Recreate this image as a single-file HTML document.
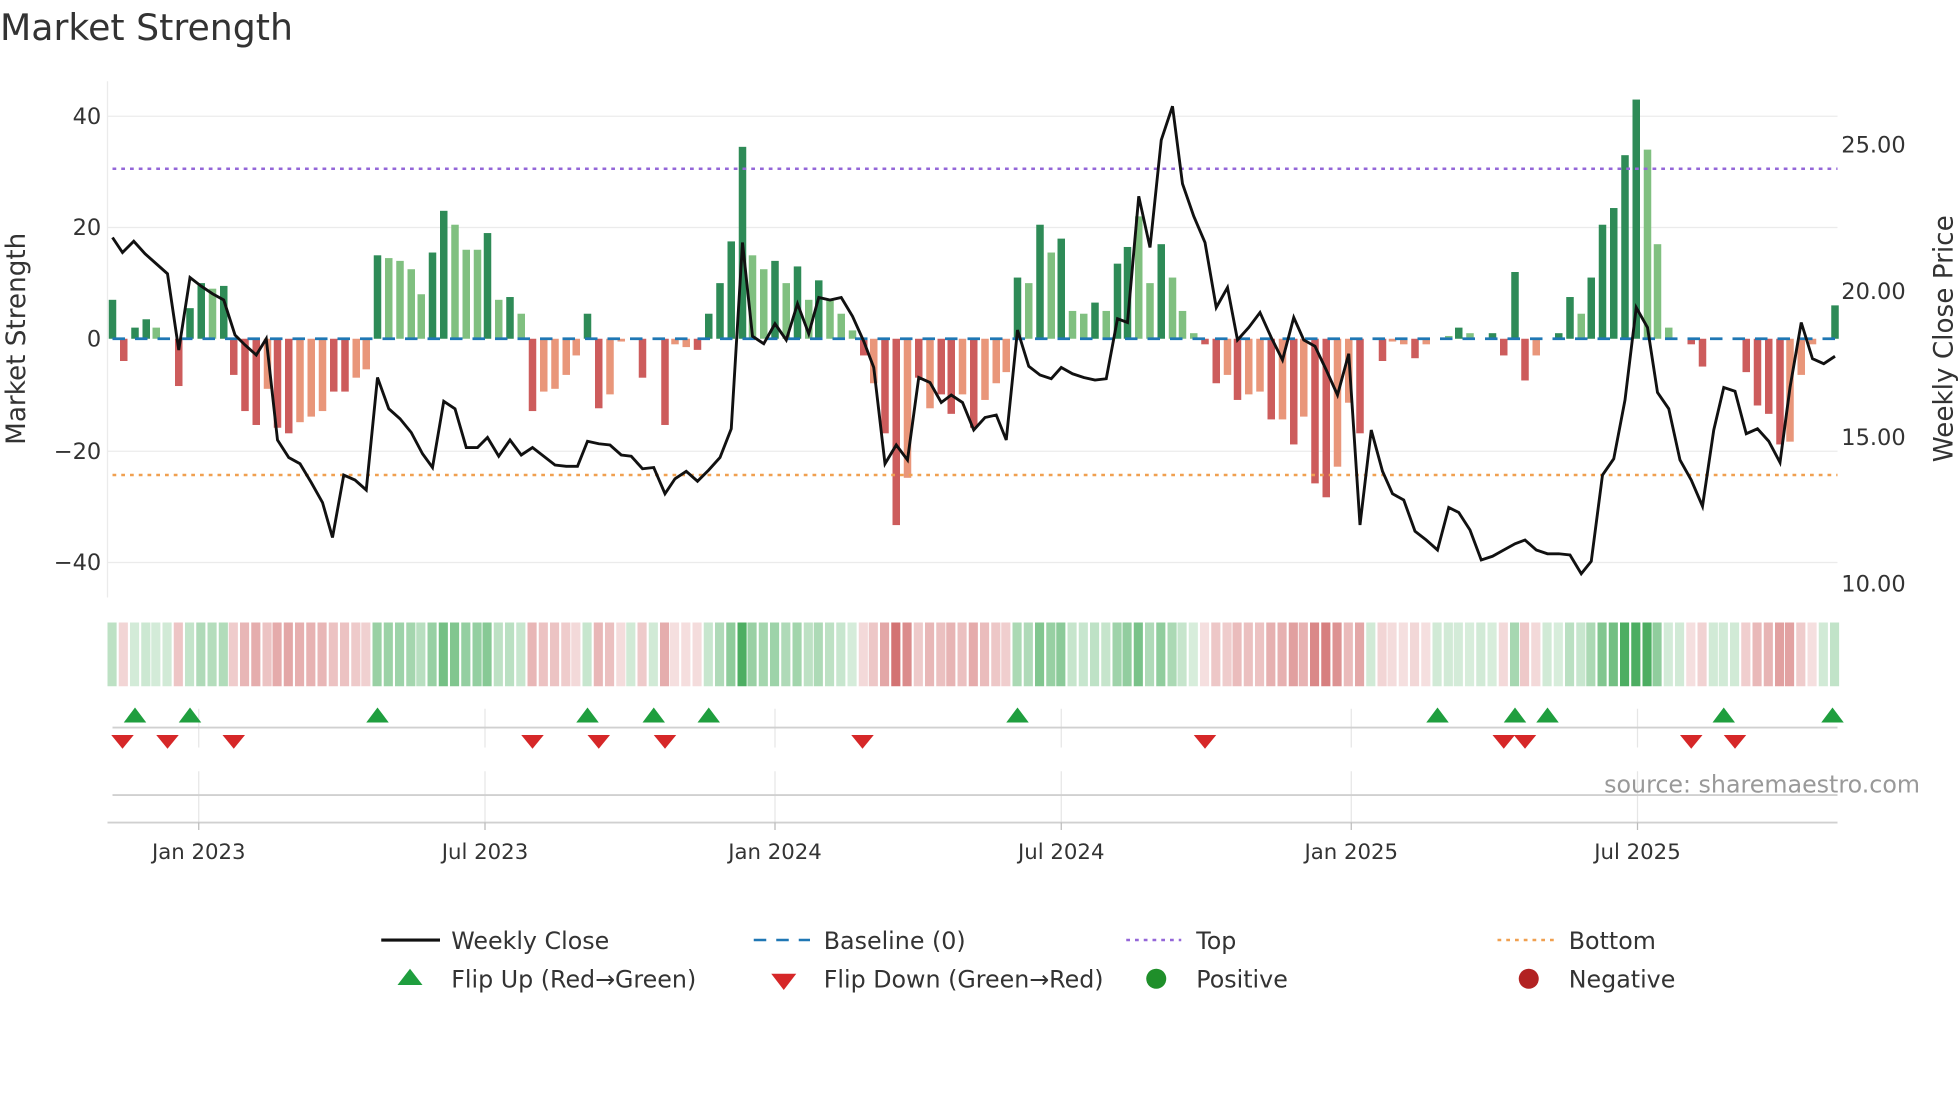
<!DOCTYPE html>
<html><head><meta charset="utf-8"><style>
html,body{margin:0;padding:0;background:#fff;width:1960px;height:1102px;overflow:hidden}
svg{display:block;font-family:"DejaVu Sans","Liberation Sans",sans-serif}
</style></head><body>
<svg id="s" width="1960" height="1102" viewBox="0 0 1568 881.6" xmlns="http://www.w3.org/2000/svg">
<text x="0" y="32" font-size="29" fill="#333">Market Strength</text>
<g stroke="#ebebeb" stroke-width="1">
<line x1="86" y1="93" x2="1470" y2="93"/><line x1="86" y1="182" x2="1470" y2="182"/>
<line x1="86" y1="361" x2="1470" y2="361"/><line x1="86" y1="450" x2="1470" y2="450"/>
<line x1="86" y1="65" x2="86" y2="478"/>
</g>
<g font-size="18" fill="#333" text-anchor="end">
<text x="81" y="99">40</text><text x="81" y="188">20</text><text x="81" y="277">0</text>
<text x="81" y="367">−20</text><text x="81" y="456">−40</text>
</g>
<g font-size="18" fill="#333">
<text x="1473" y="122">25.00</text><text x="1473" y="239">20.00</text>
<text x="1473" y="356">15.00</text><text x="1473" y="473">10.00</text>
</g>
<text transform="translate(20,271) rotate(-90)" font-size="21" fill="#333" text-anchor="middle">Market Strength</text>
<text transform="translate(1562,271) rotate(-90)" font-size="21" fill="#333" text-anchor="middle">Weekly Close Price</text>
<g id="bars"></g>
<line x1="90" y1="271" x2="1470" y2="271" stroke="#1f77b4" stroke-width="2.2" stroke-dasharray="10,8"/>
<line x1="90" y1="135" x2="1470" y2="135" stroke="#9467d8" stroke-width="2" stroke-dasharray="3,4"/>
<line x1="90" y1="380" x2="1470" y2="380" stroke="#f0a050" stroke-width="2" stroke-dasharray="3,4"/>
<polyline id="price" fill="none" stroke="#111" stroke-width="2.3" stroke-linejoin="miter"/>
<g id="heat"></g>
<g stroke="#e6e6e6" stroke-width="1">
<line x1="159" y1="567" x2="159" y2="598"/><line x1="388" y1="567" x2="388" y2="598"/><line x1="620" y1="567" x2="620" y2="598"/><line x1="849" y1="567" x2="849" y2="598"/><line x1="1081" y1="567" x2="1081" y2="598"/><line x1="1310" y1="567" x2="1310" y2="598"/>
<line x1="159" y1="617" x2="159" y2="658"/><line x1="388" y1="617" x2="388" y2="658"/><line x1="620" y1="617" x2="620" y2="658"/><line x1="849" y1="617" x2="849" y2="658"/><line x1="1081" y1="617" x2="1081" y2="658"/><line x1="1310" y1="617" x2="1310" y2="658"/>
</g>
<line x1="90" y1="582" x2="1470" y2="582" stroke="#d0d0d0" stroke-width="1.5"/>
<line x1="90" y1="636" x2="1470" y2="636" stroke="#d0d0d0" stroke-width="1.5"/>
<line x1="86" y1="658" x2="1470" y2="658" stroke="#d0d0d0" stroke-width="1.5"/>
<g stroke="#bbb" stroke-width="1"><line x1="159" y1="658" x2="159" y2="664"/><line x1="388" y1="658" x2="388" y2="664"/><line x1="620" y1="658" x2="620" y2="664"/><line x1="849" y1="658" x2="849" y2="664"/><line x1="1081" y1="658" x2="1081" y2="664"/><line x1="1310" y1="658" x2="1310" y2="664"/></g>
<g id="marks"></g>
<text x="1536" y="634" font-size="19" fill="#999" text-anchor="end">source: sharemaestro.com</text>
<g font-size="17" fill="#333" text-anchor="middle">
<text x="159" y="687">Jan 2023</text><text x="388" y="687">Jul 2023</text><text x="620" y="687">Jan 2024</text>
<text x="849" y="687">Jul 2024</text><text x="1081" y="687">Jan 2025</text><text x="1310" y="687">Jul 2025</text>
</g>
<g font-size="19" fill="#333">
<line x1="305" y1="752" x2="352" y2="752" stroke="#111" stroke-width="2.5"/><text x="361" y="759">Weekly Close</text>
<line x1="603" y1="752" x2="648" y2="752" stroke="#1f77b4" stroke-width="2" stroke-dasharray="10,8"/><text x="659" y="759">Baseline (0)</text>
<line x1="901" y1="752" x2="945" y2="752" stroke="#9467d8" stroke-width="2" stroke-dasharray="3,4"/><text x="957" y="759">Top</text>
<line x1="1198" y1="752" x2="1243" y2="752" stroke="#f0a050" stroke-width="2" stroke-dasharray="3,4"/><text x="1255" y="759">Bottom</text>
<polygon points="328,775 338,788 318,788" fill="#1f9e3e"/><text x="361" y="790">Flip Up (Red→Green)</text>
<polygon points="617,779 637,779 627,792" fill="#d62728"/><text x="659" y="790">Flip Down (Green→Red)</text>
<circle cx="925" cy="783" r="8" fill="#1f8f2a"/><text x="957" y="790">Positive</text>
<circle cx="1223" cy="783" r="8" fill="#b22222"/><text x="1255" y="790">Negative</text>
</g>
</svg>
<script>
var B=[[90,7,'D'],[99,-4,'R'],[108,2,'D'],[117,3.5,'D'],[125,2,'L'],[134,0,'D'],[143,-8.5,'R'],[152,5.5,'D'],[161,10,'D'],[170,9,'L'],[179,9.5,'D'],[187,-6.5,'R'],[196,-13,'R'],[205,-15.5,'R'],[214,-9,'S'],[222,-16,'R'],[231,-17,'R'],[240,-15,'S'],[249,-14,'S'],[258,-13,'S'],[267,-9.5,'R'],[276,-9.5,'R'],[285,-7,'S'],[293,-5.5,'S'],
[302,15,'D'],[311,14.5,'L'],[320,14,'L'],[329,12.5,'L'],[337,8,'L'],[346,15.5,'D'],[355,23,'D'],[364,20.5,'L'],[373,16,'L'],[382,16,'L'],[390,19,'D'],[399,7,'L'],[408,7.5,'D'],[417,4.5,'L'],
[426,-13,'R'],[435,-9.5,'S'],[444,-9,'S'],[453,-6.5,'S'],[461,-3,'S'],[470,4.5,'D'],[479,-12.5,'R'],[488,-10,'S'],[497,-0.5,'S'],[505,0,'D'],[514,-7,'R'],[523,0,'D'],[532,-15.5,'R'],[540,-1,'S'],[549,-1.5,'S'],[558,-2,'R'],[567,4.5,'D'],[576,10,'D'],[585,17.5,'D'],[594,34.5,'D'],[602,15,'L'],[611,12.5,'L'],[620,14,'D'],[629,10,'L'],[638,13,'D'],[647,7,'L'],[655,10.5,'D'],[664,7,'L'],[673,4.5,'L'],[682,1.5,'L'],
[691,-3,'R'],[699,-8,'S'],[708,-17,'R'],[717,-33.5,'R'],[726,-25,'S'],[735,-7,'R'],[744,-12.5,'S'],[753,-10,'R'],[761,-13.5,'R'],[770,-10,'S'],[779,-16,'R'],[788,-11,'S'],[797,-8,'S'],[805,-6,'S'],
[814,11,'D'],[823,10,'L'],[832,20.5,'D'],[841,15.5,'L'],[849,18,'D'],[858,5,'L'],[867,4.5,'L'],[876,6.5,'D'],[885,5,'L'],[894,13.5,'D'],[902,16.5,'D'],[911,22,'L'],[920,10,'L'],[929,17,'D'],[938,11,'L'],[946,5,'L'],[955,1,'L'],
[964,-1,'R'],[973,-8,'R'],[982,-6.5,'S'],[990,-11,'R'],[999,-10,'S'],[1008,-9.5,'S'],[1017,-14.5,'R'],[1026,-14.5,'S'],[1035,-19,'R'],[1043,-14,'S'],[1052,-26,'R'],[1061,-28.5,'R'],[1070,-23,'S'],[1079,-11.5,'S'],[1088,-17,'R'],[1097,0,'D'],[1106,-4,'R'],[1114,-0.5,'S'],[1123,-1,'S'],[1132,-3.5,'R'],[1141,-1,'S'],[1150,0,'L'],[1159,0.5,'L'],[1167,2,'D'],[1176,1,'L'],[1185,0,'L'],[1194,1,'D'],[1203,-3,'R'],[1212,12,'D'],[1220,-7.5,'R'],[1229,-3,'S'],[1238,0,'L'],[1247,1,'D'],[1256,7.5,'D'],[1265,4.5,'L'],[1273,11,'D'],[1282,20.5,'D'],[1291,23.5,'D'],[1300,33,'D'],[1309,43,'D'],[1318,34,'L'],[1326,17,'L'],[1335,2,'L'],[1344,0,'L'],[1353,-1,'R'],[1362,-5,'R'],[1371,0,'S'],[1379,0,'S'],[1388,0,'S'],[1397,-6,'R'],[1406,-12,'R'],[1415,-13.5,'R'],[1424,-19,'R'],[1432,-18.5,'S'],[1441,-6.5,'S'],[1450,-1,'S'],[1459,0,'S'],[1468,6,'D']];
var C={D:'#2e8b57',L:'#80c080',R:'#cd5c5c',S:'#e9967a'};
var NS='http://www.w3.org/2000/svg',bars=document.getElementById('bars'),heat=document.getElementById('heat');
function el(t,a,p){var e=document.createElementNS(NS,t);for(var k in a)e.setAttribute(k,a[k]);p.appendChild(e);return e;}
B.forEach(function(b){var x=b[0],v=b[1],h=Math.abs(v)*4.45;
 if(h>0.3)el('rect',{x:x-3,y:v>0?271-h:271,width:6,height:h,fill:C[b[2]]},bars);
 var a=Math.min(1,0.2+Math.abs(v)/40);
 var col=v>=0?'rgba(46,160,70,'+(a*0.85)+')':'rgba(200,80,80,'+(a*0.8)+')';
 if(Math.abs(v)<0.6)col=v>=0?'rgba(46,160,70,0.22)':'rgba(200,80,80,0.2)';
 el('rect',{x:x-4,y:498,width:7.3,height:51,fill:col},heat);});
var P=[[90,190],[98,202],[107,193],[116,203],[125,211],[134,219],[143,280],[152,222],[161,229],[170,235],[179,240],[188,268],[196,276],[205,284],[213,271],[222,352],[231,366],[240,371],[249,386],[258,402],[266,430],[275,380],[284,384],[293,392],[302,302],[311,327],[320,335],[329,346],[338,363],[346,374],[355,321],[364,327],[373,358],[382,358],[390,350],[399,365],[408,352],[417,364],[426,358],[435,365],[444,372],[453,373],[462,373],[470,353],[479,355],[488,356],[497,364],[505,365],[514,375],[523,374],[532,395],[540,383],[549,377],[558,385],[567,376],[576,366],[585,343],[594,194],[602,269],[611,275],[620,259],[629,272],[638,243],[647,267],[655,238],[664,240],[673,238],[682,253],[691,273],[699,294],[708,371],[717,356],[726,368],[735,302],[744,306],[753,322],[761,316],[770,322],[779,344],[788,334],[797,332],[805,352],[814,264],[823,293],[832,300],[841,303],[849,294],[858,299],[867,302],[876,304],[885,303],[894,255],[902,258],[911,157],[920,198],[929,112],[938,85],[946,147],[955,173],[964,194],[973,246],[982,230],[990,272],[999,262],[1008,250],[1017,270],[1026,288],[1035,254],[1043,272],[1052,277],[1061,296],[1070,316],[1079,283],[1088,420],[1097,344],[1106,377],[1114,395],[1123,400],[1132,425],[1141,432],[1150,440],[1159,406],[1167,410],[1176,424],[1185,448],[1194,445],[1203,440],[1212,435],[1220,432],[1229,440],[1238,443],[1247,443],[1256,444],[1265,459],[1273,449],[1282,380],[1291,367],[1300,320],[1309,246],[1318,262],[1326,314],[1335,327],[1344,368],[1353,384],[1362,405],[1371,344],[1379,310],[1388,313],[1397,347],[1406,343],[1415,353],[1424,370],[1432,310],[1441,258],[1450,287],[1459,291],[1468,285]];
document.getElementById('price').setAttribute('points',P.map(function(p){return p.join(',')}).join(' '));
var m=document.getElementById('marks');
[108,152,302,470,523,567,814,1150,1212,1238,1379,1466].forEach(function(x){el('polygon',{points:x+',566 '+(x+9)+',578 '+(x-9)+',578',fill:'#1f9e3e'},m);});
[98,134,187,426,479,532,690,964,1203,1220,1353,1388].forEach(function(x){el('polygon',{points:(x-9)+',588 '+(x+9)+',588 '+x+',599',fill:'#d62728'},m);});
</script>
</body></html>
